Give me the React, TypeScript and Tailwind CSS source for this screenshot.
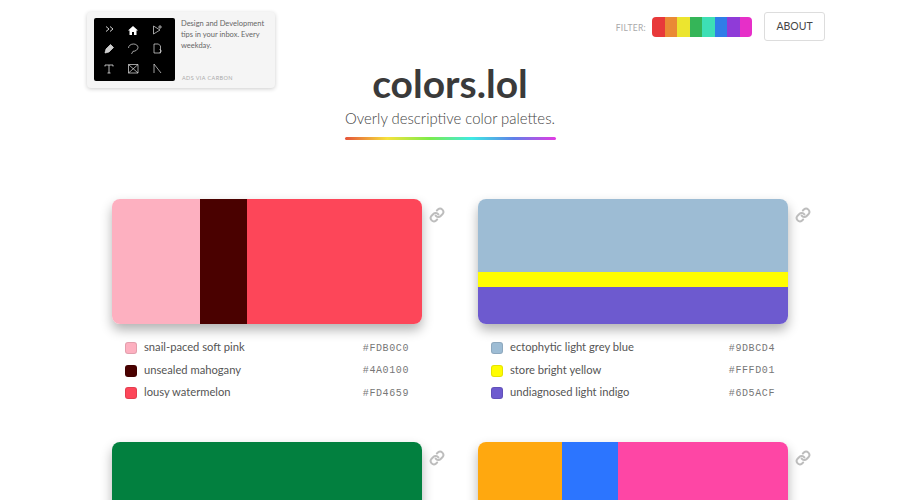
import React from "react";

const filterColors = ["#e8393a", "#ea8a35", "#ece52f", "#35b558", "#3ddfb5", "#2f7de8", "#8f3bd8", "#e62fc8"];

const palettes = [
  {
    dir: "row",
    bands: [
      { color: "#FDB0C0", size: 88 },
      { color: "#4A0100", size: 47 },
      { color: "#FD4659", size: 175 },
    ],
    names: [
      ["snail-paced soft pink", "#FDB0C0"],
      ["unsealed mahogany", "#4A0100"],
      ["lousy watermelon", "#FD4659"],
    ],
  },
  {
    dir: "col",
    bands: [
      { color: "#9DBCD4", size: 73 },
      { color: "#FFFD01", size: 15 },
      { color: "#6D5ACF", size: 37 },
    ],
    names: [
      ["ectophytic light grey blue", "#9DBCD4"],
      ["store bright yellow", "#FFFD01"],
      ["undiagnosed light indigo", "#6D5ACF"],
    ],
  },
  {
    dir: "row",
    bands: [{ color: "#02803F", size: 310 }],
    names: [],
  },
  {
    dir: "row",
    bands: [
      { color: "#FFA80F", size: 84 },
      { color: "#2C75FF", size: 56 },
      { color: "#FE46A5", size: 170 },
    ],
    names: [],
  },
];

const LinkIcon = () => (
  <svg width="16" height="16" viewBox="0 0 24 24" fill="none" stroke="#bdbdbd" strokeWidth="3" strokeLinecap="round" strokeLinejoin="round">
    <path d="M10 13a5 5 0 0 0 7.500.5l3-3a5 5 0 0 0-7-7l-1.700 1.700" />
    <path d="M14 11a5 5 0 0 0-7.500-.5l-3 3a5 5 0 0 0 7 7l1.700-1.700" />
  </svg>
);

const AdIcons = () => (
  <svg width="81" height="63" viewBox="0 0 81 63" fill="none" stroke="#e4e4e4" strokeWidth="0.7">
    {/* row 1 */}
    <path d="M12 8.500l3 2.500-3 2.500M16 8.500l3 2.500-3 2.500" strokeWidth="0.9" />
    <path d="M34 12.500l5-4.500 5 4.500h-1.500V17h-2.500v-3h-2v3h-2.500v-4.500z" fill="#fff" stroke="none" />
    <path d="M59.500 8l6.500 4-6.500 4zM66 7v4M64 9h4" />
    {/* row 2 */}
    <path d="M11 35l1-4 4.500-4.500 3 3L15 34z" fill="#cfcfcf" />
    <path d="M34.500 30c0-2.500 2.500-4 5-4s4.500 1.500 4.500 3.500-2.500 4-5 3.800l-1.500 2.700" />
    <path d="M60 26h4.500l2 2V35H60zM65.500 31l2 2-2 2" />
    {/* row 3 */}
    <path d="M11 47h8M15 47v8M13.500 55h3M11 47v1.500M19 47v1.500" strokeWidth="0.8" />
    <path d="M34.500 46.500h9.500v8.500h-9.500zM34.500 46.500l9.500 8.500M44 46.500l-9.500 8.500" />
    <path d="M60 55v-9l7 9" />
  </svg>
);

const PaletteCard = ({ palette }: { palette: (typeof palettes)[number] }) => (
  <div className="w-[338px]">
    <div className="flex items-start gap-[7px]">
      <div
        className={`flex w-[310px] h-[125px] shrink-0 rounded-[8px] overflow-hidden shadow-[0_6px_12px_rgba(0,0,0,0.3)] ${
          palette.dir === "col" ? "flex-col" : "flex-row"
        }`}
      >
        {palette.bands.map((b) => (
          <div
            key={b.color}
            className="shrink-0"
            style={palette.dir === "col" ? { height: b.size, background: b.color } : { width: b.size, background: b.color }}
          />
        ))}
      </div>
      <div className="mt-[8px]">
        <LinkIcon />
      </div>
    </div>
    <ul className="mt-[13px] w-[310px] pl-[13px] pr-[13px]">
      {palette.names.map(([name, hex]) => (
        <li key={hex} className="flex items-center h-[22.5px]">
          <span
            className="w-[12px] h-[12px] rounded-[3px] mr-[7px] border border-black/10"
            style={{ background: hex }}
          />
          <span className="text-[11.2px] text-[#555] -mt-[1px]">{name}</span>
          <span className="ml-auto text-[10px] text-[#777] font-['Liberation_Mono',monospace] tracking-[0.6px]">{hex}</span>
        </li>
      ))}
    </ul>
  </div>
);

export default function App() {
  return (
    <div className="h-[500px] overflow-hidden bg-white font-['Lato','Noto_Sans',sans-serif]">
      <header className="grid grid-cols-[1fr_auto_1fr] pl-[87px] pr-[75px]">
        <div className="pt-[12px]">
          <div className="flex w-[188px] h-[76px] bg-[#f5f5f5] rounded-[4px] shadow-[0_1px_4px_rgba(0,0,0,0.2)] pl-[7px] pt-[6px]">
            <div className="w-[81px] h-[63px] bg-black rounded-[2px] shrink-0">
              <AdIcons />
            </div>
            <div className="ml-[6px] flex flex-col">
              <p className="text-[7.5px] leading-[11px] text-[#666] w-[92px]">Design and Development tips in your inbox. Every weekday.</p>
              <p className="mt-auto mb-[6px] ml-[1px] text-[5.5px] tracking-[0.4px] text-[#aaa] uppercase">ads via carbon</p>
            </div>
          </div>
        </div>
        <div className="pt-[63px] flex flex-col items-center -ml-[12px]">
          <h1 className="text-[39px] leading-[40px] font-bold text-[#3a3a3a] font-['Lato',sans-serif]">colors.lol</h1>
          <p className="mt-[3px] text-[14.9px] leading-[24px] font-light text-[#444]">Overly descriptive color palettes.</p>
          <div className="mt-[7px] w-[211px] h-[3px] rounded-full bg-[linear-gradient(to_right,#e5533a,#f6e23c,#7cec4a,#3eeae4,#5f80e8,#e33ae3)]" />
        </div>
        <div className="pt-[12px] flex justify-end items-start">
          <span className="mt-[10px] text-[8.5px] tracking-[0.3px] text-[#aaa]">FILTER:</span>
          <div className="mt-[5px] ml-[6px] flex h-[20px] rounded-[4px] overflow-hidden">
            {filterColors.map((c) => (
              <div key={c} className="w-[12.500px]" style={{ background: c }} />
            ))}
          </div>
          <button className="ml-[12px] w-[61px] h-[29px] rounded-[3px] border border-[#ddd] bg-white text-[10.5px] text-[#444]">ABOUT</button>
        </div>
      </header>
      <main className="mt-[59px] ml-[112px] grid grid-cols-[338px_338px] gap-x-[28px] gap-y-[37px] items-start">
        {palettes.map((p, i) => (
          <PaletteCard key={i} palette={p} />
        ))}
      </main>
    </div>
  );
}
